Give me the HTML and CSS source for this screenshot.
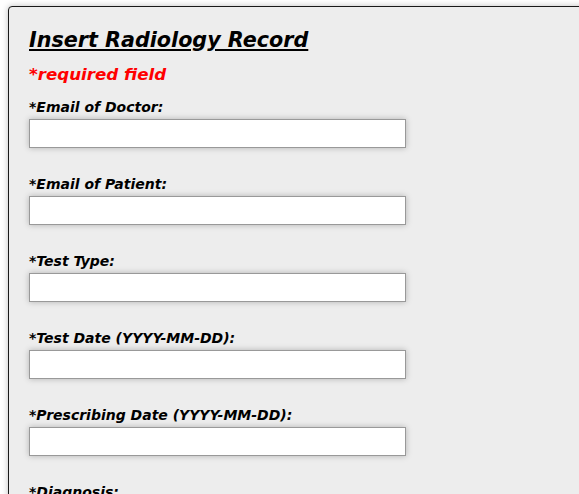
FILE: index.html
```html
<!DOCTYPE html>
<html>
<head>
<meta charset="utf-8">
<link rel="stylesheet" href="styles.css">
</head>
<body>
<div class="panel">
  <h1 class="title">Insert Radiology Record</h1>
  <p class="required">*required field</p>
  <form class="form">
    <div class="field">
      <label class="label">*Email of Doctor:</label>
      <input class="input" type="text">
    </div>
    <div class="field">
      <label class="label">*Email of Patient:</label>
      <input class="input" type="text">
    </div>
    <div class="field">
      <label class="label">*Test Type:</label>
      <input class="input" type="text">
    </div>
    <div class="field">
      <label class="label">*Test Date (YYYY-MM-DD):</label>
      <input class="input" type="text">
    </div>
    <div class="field">
      <label class="label">*Prescribing Date (YYYY-MM-DD):</label>
      <input class="input" type="text">
    </div>
    <div class="field">
      <label class="label">*Diagnosis:</label>
      <input class="input" type="text">
    </div>
  </form>
</div>
</body>
</html>
```
FILE: styles.css
```css
html, body {
  margin: 0;
  padding: 0;
  background: #ffffff;
  overflow: hidden;
}
body {
  padding: 6px 0 0 8px;
  font-family: "DejaVu Sans", sans-serif;
  font-weight: bold;
  font-style: italic;
}
.panel {
  width: 620px;
  background: #ededed;
  border: 1px solid #1a1a1a;
  border-radius: 4px;
  box-shadow: 0 0 6px rgba(0,0,0,0.25);
  padding: 20px 20px 40px 20px;
}
.title {
  margin: 0;
  font-size: 20.7px;
  line-height: 26px;
  text-decoration: underline;
  color: #000;
}
.required {
  margin: 11px 0 0 0;
  font-size: 16.7px;
  line-height: 20px;
  color: #ff0000;
}
.form {
  margin-top: 15px;
  display: flex;
  flex-direction: column;
  gap: 28px;
}
.field {
  display: flex;
  flex-direction: column;
  gap: 3px;
}
.label {
  font-size: 14px;
  line-height: 17px;
  color: #000;
}
.input {
  width: 377px;
  height: 29px;
  box-sizing: border-box;
  margin: 0;
  border: 1px solid #999;
  background: #fff;
  box-shadow: 0 0 6px rgba(0,0,0,0.25);
  padding: 0 4px;
  font-size: 13px;
  outline: none;
}
```
